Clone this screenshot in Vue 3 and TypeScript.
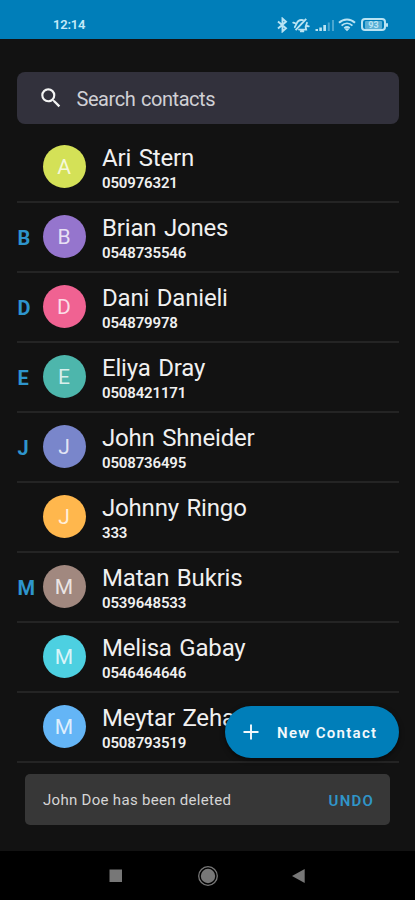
<script setup lang="ts">
interface Contact {
  section?: string
  name: string
  phone: string
  color: string
}

const contacts: Contact[] = [
  { name: 'Ari Stern', phone: '050976321', color: '#d4e157' },
  { section: 'B', name: 'Brian Jones', phone: '0548735546', color: '#9575cd' },
  { section: 'D', name: 'Dani Danieli', phone: '054879978', color: '#f06292' },
  { section: 'E', name: 'Eliya Dray', phone: '0508421171', color: '#4db6ac' },
  { section: 'J', name: 'John Shneider', phone: '0508736495', color: '#7986cb' },
  { name: 'Johnny Ringo', phone: '333', color: '#ffb74d' },
  { section: 'M', name: 'Matan Bukris', phone: '0539648533', color: '#a1887f' },
  { name: 'Melisa Gabay', phone: '0546464646', color: '#4dd0e1' },
  { name: 'Meytar Zehavi', phone: '0508793519', color: '#64b5f6' },
]
</script>

<template>
  <div class="screen">
    <header class="status">
      <span class="clock">12:14</span>
      <div class="status-icons">
        <svg class="bt" width="11" height="16" viewBox="0 0 11 16">
          <path d="M1 4.500 9 11.300 5.500 14.400V1.600L9 4.700 1 11.500" fill="none" stroke="currentColor" stroke-width="1.900" />
        </svg>
        <svg class="mute" width="18" height="16" viewBox="0 0 18 16">
          <path d="M2.800 10.200 4.600 6.600C5.800 3.800 8.400 2.600 11 3.200M7 12.600h7.200l-.6-2.800 1.400-4M8.800 14.400h2.600M15 9l1.800.4M1.200 5.600l1.800.6" fill="none" stroke="currentColor" stroke-width="1.800" stroke-linecap="round" />
          <path d="M3.600 13.200 14.200 1.800" stroke="currentColor" stroke-width="1.900" />
        </svg>
        <svg class="signal" width="20" height="14" viewBox="0 0 20 14">
          <path d="M.5 11h2.500v2H.5zM4.300 9.500h2.600V13H4.300zM8.300 7h2.700v6H8.300z" fill="currentColor" />
          <path d="M12.800 4.500h2V13h-2zM17 2h2v11h-2z" fill="currentColor" opacity=".4" />
        </svg>
        <svg class="wifi" width="18" height="14" viewBox="0 0 18 14">
          <path d="M1 4.800C5.500.4 12.500.4 17 4.800M3.600 7.600c3.200-3 7.600-3 10.800 0M6.300 10.200c1.700-1.500 3.700-1.500 5.400 0" fill="none" stroke="currentColor" stroke-width="1.900" />
          <path d="m6.800 11 2.200 2.300L11.200 11q-2.200-1.400-4.400 0z" fill="currentColor" />
        </svg>
        <span class="battery"><span class="charge">93</span></span>
      </div>
    </header>

    <main class="content">
      <div class="search">
        <svg width="26" height="26" viewBox="0 0 24 24">
          <path fill="currentColor" d="M15.500 14h-.79l-.28-.27A6.471 6.471 0 0 0 16 9.500 6.500 6.500 0 1 0 9.500 16c1.610 0 3.090-.59 4.230-1.570l.27.28v.79l5 4.990L20.490 19l-4.990-5zm-6 0C7.010 14 5 11.990 5 9.500S7.010 5 9.500 5 14 7.010 14 9.500 11.990 14 9.500 14z" />
        </svg>
        <span class="placeholder">Search contacts</span>
      </div>

      <ul class="list">
        <li v-for="c in contacts" :key="c.name" class="row">
          <span class="section">{{ c.section }}</span>
          <span class="avatar" :style="{ backgroundColor: c.color }">{{ c.name.charAt(0) }}</span>
          <div class="details">
            <span class="name">{{ c.name }}</span>
            <span class="phone">{{ c.phone }}</span>
          </div>
        </li>
      </ul>

      <button class="fab">
        <svg width="16" height="16" viewBox="0 0 16 16">
          <path d="M8 .5v15M.5 8h15" stroke="currentColor" stroke-width="1.900" />
        </svg>
        <span>New Contact</span>
      </button>

      <div class="snackbar">
        <span class="message">John Doe has been deleted</span>
        <button class="undo">UNDO</button>
      </div>
    </main>

    <nav class="navbar">
      <svg width="20" height="20" viewBox="0 0 20 20"><path d="M3.500 3.500h12.500v12.500H3.500z" fill="currentColor" /></svg>
      <svg width="22" height="22" viewBox="0 0 22 22">
        <circle cx="11" cy="11" r="9.300" fill="none" stroke="currentColor" stroke-width="1.300" />
        <circle cx="11" cy="11" r="7.200" fill="currentColor" />
      </svg>
      <svg width="20" height="20" viewBox="0 0 20 20"><path d="M15.700 3v13.900L3 9.900z" fill="currentColor" /></svg>
    </nav>
  </div>
</template>

<style>
body {
  background: #121212;
}
</style>

<style scoped>
.screen {
  position: relative;
  display: flex;
  flex-direction: column;
  width: 415px;
  height: 900px;
  overflow: hidden;
  box-sizing: border-box;
  background: #121212;
  color: #f0f0f0;
  font-family: Roboto, sans-serif;
}
button {
  border: 0;
  padding: 0;
  background: none;
  font-family: inherit;
}
.status {
  display: flex;
  flex: none;
  align-items: flex-start;
  justify-content: space-between;
  height: 39px;
  padding: 16px 25px 0 53px;
  box-sizing: border-box;
  background: #007eb9;
  color: #b9e3f3;
}
.clock {
  color: #c5eaf8;
  font-size: 13px;
  line-height: 18px;
  font-weight: 600;
  letter-spacing: -0.2px;
}
.status-icons {
  display: flex;
  align-items: center;
  height: 17px;
}
.mute {
  margin-left: 4px;
}
.signal {
  margin-left: 5px;
}
.wifi {
  margin-left: 3px;
}
.battery {
  position: relative;
  display: flex;
  align-items: center;
  justify-content: center;
  width: 25px;
  height: 13px;
  margin: 0 4px 0 5px;
  border: 2px solid currentColor;
  border-radius: 4px;
  box-sizing: border-box;
}
.battery::after {
  content: '';
  position: absolute;
  right: -4px;
  width: 2px;
  height: 4px;
  border-radius: 1px;
  background: currentColor;
}
.charge {
  width: 17px;
  height: 8px;
  border-radius: 1px;
  background: rgba(197, 234, 248, 0.45);
  font-size: 9px;
  line-height: 8.5px;
  font-weight: 700;
  text-align: center;
}
.content {
  flex: none;
  height: 812px;
  padding: 33px 16px 0 17px;
  box-sizing: border-box;
}
.search {
  display: flex;
  align-items: center;
  height: 52px;
  padding-left: 21px;
  box-sizing: border-box;
  border-radius: 8px;
  background: #32313c;
  color: #f4f4f4;
}
.placeholder {
  margin: 2px 0 0 12.500px;
  color: #d0d0d5;
  font-size: 20px;
  letter-spacing: -0.430px;
  word-spacing: 1px;
  white-space: nowrap;
}
.list {
  margin: 9px 0 0;
  padding: 0;
  list-style: none;
}
.row {
  display: flex;
  align-items: center;
  height: 70px;
  padding-bottom: 1px;
  border-bottom: 2px solid #242424;
  box-sizing: border-box;
}
.section {
  width: 25px;
  margin-top: 2px;
  padding-left: 0.500px;
  color: #2e95cd;
  font-size: 20px;
  font-weight: 700;
}
.avatar {
  display: flex;
  align-items: center;
  justify-content: center;
  width: 43px;
  height: 43px;
  border-radius: 50%;
  color: rgba(255, 255, 255, 0.8);
  font-size: 21px;
  font-weight: 400;
}
.details {
  display: flex;
  flex-direction: column;
  margin: 3px 0 0 16.500px;
}
.name {
  font-size: 24px;
  line-height: 28px;
  letter-spacing: -0.180px;
  word-spacing: 1.800px;
  white-space: nowrap;
}
.phone {
  margin-top: 3px;
  font-size: 15px;
  line-height: 17px;
  font-weight: 600;
  letter-spacing: -0.150px;
}
.fab {
  position: absolute;
  right: 16px;
  top: 706px;
  display: flex;
  align-items: center;
  width: 174px;
  height: 52px;
  padding-left: 18px;
  border-radius: 26px;
  background: #007eb9;
  box-shadow: 0 2px 5px rgba(0, 0, 0, 0.5);
  color: #f3f9fc;
  font-size: 15px;
  font-weight: 600;
  letter-spacing: 1.300px;
  white-space: nowrap;
}
.fab span {
  margin: 1px 0 0 18px;
}
.snackbar {
  display: flex;
  align-items: center;
  justify-content: space-between;
  height: 51px;
  margin: 11px 9px 0 8px;
  padding: 0 16px 0 18px;
  box-sizing: border-box;
  border-radius: 5px;
  background: #373737;
}
.message {
  margin-top: 1px;
  color: #d5d5d5;
  font-size: 15px;
  letter-spacing: 0.300px;
  white-space: nowrap;
}
.undo {
  margin-top: 2px;
  color: #3095c8;
  font-size: 15px;
  font-weight: 600;
  letter-spacing: 1.200px;
}
.navbar {
  display: flex;
  flex: 1;
  align-items: center;
  padding: 0 106px 0 106px;
  justify-content: space-between;
  background: #000;
  color: #777;
}
</style>
